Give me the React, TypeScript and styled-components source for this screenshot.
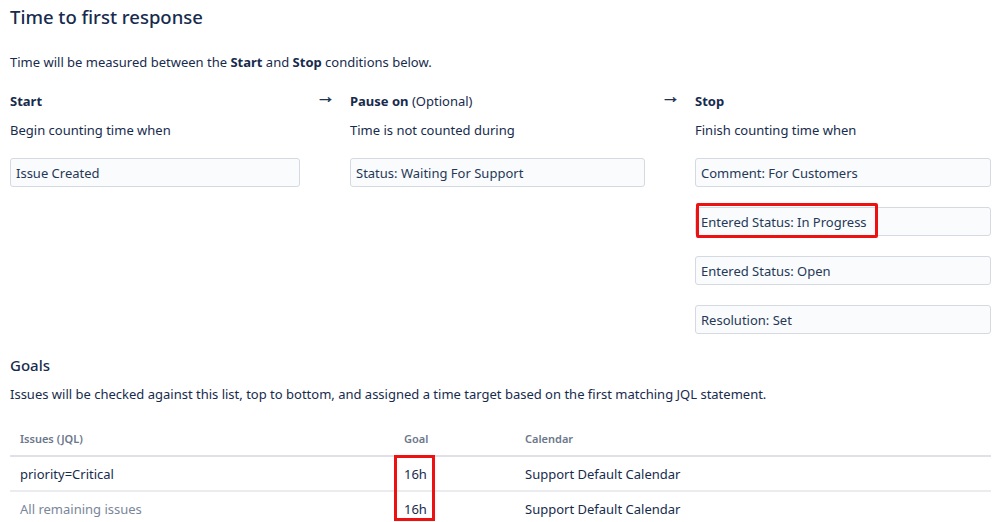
import React from "react";
import styled, { createGlobalStyle } from "styled-components";

const GlobalStyle = createGlobalStyle`
  body {
    margin: 0;
    background: #ffffff;
    font-family: "Noto Sans", "Open Sans", sans-serif;
    color: #172b4d;
  }
`;

interface Condition {
  label: string;
  highlight?: boolean;
}

interface Column {
  title: string;
  optional?: string;
  caption: string;
  items: Condition[];
}

const columns: Column[] = [
  { title: "Start", caption: "Begin counting time when", items: [{ label: "Issue Created" }] },
  {
    title: "Pause on",
    optional: "(Optional)",
    caption: "Time is not counted during",
    items: [{ label: "Status: Waiting For Support" }],
  },
  {
    title: "Stop",
    caption: "Finish counting time when",
    items: [
      { label: "Comment: For Customers" },
      { label: "Entered Status: In Progress", highlight: true },
      { label: "Entered Status: Open" },
      { label: "Resolution: Set" },
    ],
  },
];

const goals = [
  { jql: "priority=Critical", goal: "16h", calendar: "Support Default Calendar", muted: false },
  { jql: "All remaining issues", goal: "16h", calendar: "Support Default Calendar", muted: true },
];

const App = () => {
  return (
    <Page>
      <GlobalStyle />
      <Title>Time to first response</Title>
      <Intro>
        Time will be measured between the <b>Start</b> and <b>Stop</b> conditions below.
      </Intro>
      <Conditions>
        {columns.map((col, i) => (
          <React.Fragment key={col.title}>
            {i > 0 && <Arrow>→</Arrow>}
            <ConditionColumn>
              <ColumnTitle>
                {col.title}
                {col.optional && <Optional> {col.optional}</Optional>}
              </ColumnTitle>
              <Caption>{col.caption}</Caption>
              <BoxList>
                {col.items.map((item) => (
                  <ConditionBox key={item.label}>
                    {item.label}
                    {item.highlight && <Highlight />}
                  </ConditionBox>
                ))}
              </BoxList>
            </ConditionColumn>
          </React.Fragment>
        ))}
      </Conditions>

      <GoalsTitle>Goals</GoalsTitle>
      <GoalsText>
        Issues will be checked against this list, top to bottom, and assigned a time target based on the first
        matching JQL statement.
      </GoalsText>

      <GoalTable>
        <HeadRow>
          <HeadCell>Issues (JQL)</HeadCell>
          <HeadCell>Goal</HeadCell>
          <HeadCell>Calendar</HeadCell>
          <GoalHighlight />
        </HeadRow>
        {goals.map((g, i) => (
          <BodyRow key={g.jql} $last={i === goals.length - 1}>
            <Cell $muted={g.muted}>{g.jql}</Cell>
            <Cell>{g.goal}</Cell>
            <Cell>{g.calendar}</Cell>
          </BodyRow>
        ))}
      </GoalTable>
    </Page>
  );
};

export default App;

const Page = styled.div`
  padding: 3px 8px 0 10px;
  font-size: 13px;
  line-height: 20px;
`;

const Title = styled.h1`
  margin: 0;
  font-size: 18.5px;
  line-height: 28px;
  font-weight: 500;
  color: #172b4d;
`;

const Intro = styled.p`
  margin: 21px 0 0;
  color: #172b4d;
  b {
    font-weight: 700;
  }
`;

const Conditions = styled.div`
  display: grid;
  grid-template-columns: 290px 50px 295px 50px 1fr;
  margin-top: 19px;
`;

const Arrow = styled.div`
  font-size: 19px;
  line-height: 20px;
  font-weight: 700;
  padding-left: 16px;
  margin-top: -5px;
  color: #172b4d;
  -webkit-text-stroke: 0.5px #172b4d;
`;

const ConditionColumn = styled.div`
  display: flex;
  flex-direction: column;
`;

const ColumnTitle = styled.div`
  font-weight: 700;
  line-height: 20px;
`;

const Optional = styled.span`
  font-weight: 400;
`;

const Caption = styled.div`
  margin-top: 9px;
`;

const BoxList = styled.div`
  display: flex;
  flex-direction: column;
  gap: 20px;
  margin-top: 18px;
`;

const ConditionBox = styled.div`
  position: relative;
  height: 29px;
  box-sizing: border-box;
  border: 1px solid #d5d9e0;
  border-radius: 3px;
  background: #fafbfc;
  padding: 0 5px;
  display: flex;
  align-items: center;
  color: #253858;
`;

const Highlight = styled.span`
  position: absolute;
  left: 0;
  top: -5px;
  width: 182px;
  height: 35px;
  box-sizing: border-box;
  border: 3px solid #ee1111;
  border-radius: 2px;
`;

const GoalsTitle = styled.h2`
  margin: 19px 0 0;
  font-size: 15px;
  line-height: 24px;
  font-weight: 500;
`;

const GoalsText = styled.p`
  margin: 7px 0 0;
`;

const GoalTable = styled.div`
  margin-top: 18px;
  width: 981px;
`;

const rowGrid = `
  display: grid;
  grid-template-columns: 384px 121px 1fr;
`;

const HeadRow = styled.div`
  ${rowGrid}
  position: relative;
  height: 33px;
  border-bottom: 2px solid #dfe1e6;
`;

const HeadCell = styled.div`
  padding: 7px 10px 0;
  font-size: 11px;
  font-weight: 600;
  color: #6b778c;
`;

const GoalHighlight = styled.span`
  position: absolute;
  left: 384px;
  top: 33px;
  width: 41px;
  height: 66px;
  box-sizing: border-box;
  border: 3px solid #ee1111;
  z-index: 1;
`;

const BodyRow = styled.div<{ $last: boolean }>`
  ${rowGrid}
  height: 33px;
  align-items: center;
  border-bottom: ${(p) => (p.$last ? "none" : "2px solid #ebecf0")};
`;

const Cell = styled.div<{ $muted?: boolean }>`
  padding: 0 10px;
  color: ${(p) => (p.$muted ? "#7a869a" : "#172b4d")};
`;
